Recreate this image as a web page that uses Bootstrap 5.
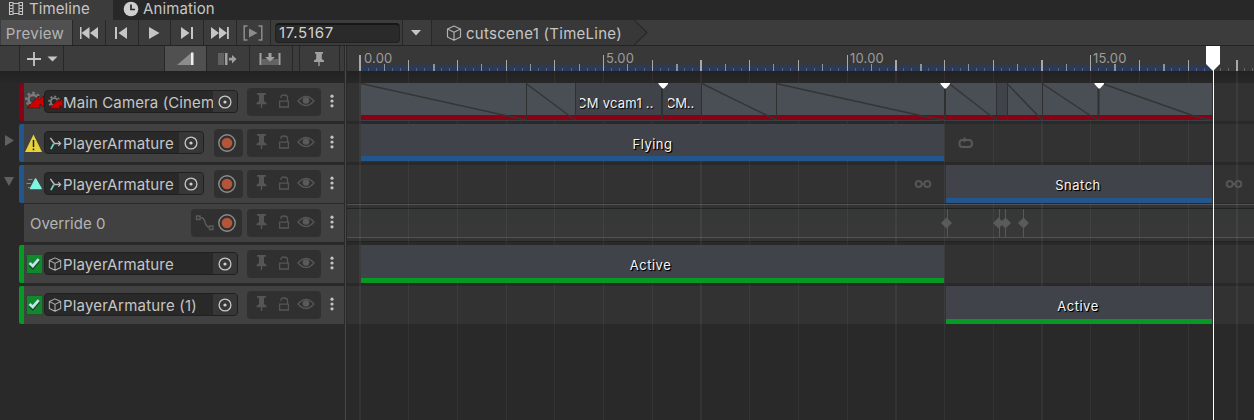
<!DOCTYPE html>
<html lang="en">
<head>
<meta charset="utf-8">
<title>Timeline</title>
<link href="https://cdn.jsdelivr.net/npm/bootstrap@5.3.0/dist/css/bootstrap.min.css" rel="stylesheet">
<style>
body{margin:0;background:#292929;color:#c6c6c6;font-family:Inter,"Liberation Sans",sans-serif;font-size:15px;line-height:20px;width:1254px;height:420px;overflow:hidden;white-space:nowrap}
svg{display:block;flex:none}
.tabs{height:20px;background:#282828}
.tab-on{width:113px;background:#3c3c3c}
.tab-off{padding-left:10px}
.tabs span{line-height:17px;letter-spacing:.1px}
.bar{height:26px;background:#3c3c3c;border-bottom:1px solid #232323}
.tb{border-right:1px solid #272727;height:100%;display:flex;align-items:center;justify-content:center;flex:none}
.nudge{padding-right:2px}
.preview{background:#505050;width:72px;margin-left:1px;color:#b4b4b4;letter-spacing:.3px;padding:2px 3px 0 0}
.timebox{width:125px;height:20px;background:#2a2a2a;border:1px solid #212121;border-top:2px solid #161616;border-radius:4px;margin:0 2px 0 4px;padding-left:3px;line-height:16px;color:#d2d2d2;flex:none;letter-spacing:.75px}
.crumb{width:202px;background:#383838;height:100%;flex:none}
.crumb span{letter-spacing:.27px;padding-top:2px}
.left{width:344px;flex:none}
.bar2{height:25px;background:#3c3c3c}
.split{width:3px;flex:none;background:linear-gradient(90deg,#292929 1px,#484848 1px,#484848 2px,#292929 2px)}
.right{width:907px;flex:none;position:relative}
.thead{height:38px;margin-bottom:3px;display:flex;position:relative}
.fold{width:19px;flex:none}
.strip{width:5px;flex:none;border-radius:2px 0 0 2px}
.hbody{width:320px;background:#414141;display:flex;flex:none;position:relative}
.ticon{width:20px;padding:0 0 0 1px;flex:none}
.obj{width:194px;height:23px;margin-top:7px;background:#292929;border:1px solid #202020;border-radius:4px;display:flex;flex:none;overflow:hidden}
.obj.short{width:160px}
.obj .nm{flex:1 1 0;min-width:0;line-height:23px;letter-spacing:.12px}
.pick{width:24px;background:#373737;display:flex;align-items:center;justify-content:center;flex:none;padding-right:1px}
.rec,.grp{height:28px;margin-top:5px;background:#303030;border-radius:4px;display:flex;align-items:center;flex:none}
.rec{width:29px;margin-left:10px;padding-left:4px}
.grp{width:74px;margin-left:4px}
.kebab{margin:10px 0 0 9px}
.red{background:#8a0014}.blue{background:#23568c}.green{background:#069a24}
.lane{height:38px;margin-bottom:3px;background:#323232;display:flex}
.gridlines{position:absolute;left:0;top:25px;z-index:1}
.lanes{position:relative;height:349px;padding-top:12px}
.clip{height:37px;background:#41434b;display:flex;flex-direction:column;z-index:2;flex:none}
.clip b{font-weight:400;font-size:13px;letter-spacing:.5px;color:#f6f6f6;text-shadow:1px 1px 0 #000,1px 1px 1px #000;text-align:center;flex:1;line-height:40px;height:32px;overflow:hidden;padding-right:2px}
.clip i{height:5px}
.lane svg{z-index:2}
.curve{height:42px;display:flex;background:linear-gradient(#292929 0 1px,#525252 1px 2px,#333 2px 5px,#222 5px 6px,#363837 6px 20px,#383838 20px 34px,#525252 34px 35px,#333 35px 38px,#222 38px 39px,#292929 39px)}
.playhead{position:absolute;left:859px;top:0;z-index:3}
.fade12{position:absolute;top:25px;left:0;width:907px;height:12px;background:linear-gradient(#222,#282828)}
</style>
<script src="https://cdn.jsdelivr.net/npm/bootstrap@5.3.0/dist/js/bootstrap.bundle.min.js"></script>
</head>
<body>
<svg width="0" height="0" style="position:absolute">
<symbol id="cube" viewBox="0 0 16 16"><path d="M8 1L14.5 4V12L8 15.2L1.5 12V4ZM1.5 4L8 7.3L14.5 4M8 7.3V15" fill="none" stroke="#b0b0b0" stroke-width="1.2" stroke-linejoin="round"/></symbol>
<symbol id="target" viewBox="0 0 14 14"><circle cx="7" cy="7" r="5.9" fill="none" stroke="#c8c8c8" stroke-width="1.3"/><circle cx="7" cy="7" r="1.6" fill="#d0d0d0"/></symbol>
<symbol id="record" viewBox="0 0 18 18"><circle cx="9" cy="9" r="8.2" fill="none" stroke="#8c8c8c" stroke-width="1.4"/><circle cx="9" cy="9" r="5.3" fill="#b4553a"/></symbol>
<symbol id="dots" viewBox="0 0 4 18"><g fill="#c4c4c4"><circle cx="2" cy="3.2" r="1.6"/><circle cx="2" cy="8" r="1.6"/><circle cx="2" cy="12.8" r="1.6"/></g></symbol>
<symbol id="flags" viewBox="0 0 74 28"><path d="M10 5H19V6.800H17V13L19.500 15V16.300H15.200V20H13.800V16.300H9.500V15L12 13V6.800H10Z" fill="#555"/><path d="M34 10V9Q34 7 37 7T40.500 9V13M32.600 13.200H41.400V19H32.600Z" fill="none" stroke="#555" stroke-width="1.3"/><path d="M51 13Q59 4 67 13Q59 22 51 13Z" fill="none" stroke="#555" stroke-width="1.3"/><circle cx="59" cy="12.5" r="3.300" fill="#5a5a5a"/></symbol>
<symbol id="camgear" viewBox="0 0 19 19"><circle cx="8" cy="8.500" r="4.500" fill="none" stroke="#7c7c7c" stroke-width="2.400"/><circle cx="8" cy="8.500" r="6.700" fill="none" stroke="#7c7c7c" stroke-width="2.200" stroke-dasharray="2.600 2.500"/><path d="M2 17L13.500 5V9L18.500 5V16L15 13V17Z" fill="#d00000" stroke="#400" stroke-width=".5"/></symbol>
<symbol id="avatar" viewBox="0 0 14 14"><path d="M1.500 1L5.500 6.500M5 7H12" stroke="#bbb" stroke-width="1.600" fill="none"/><path d="M10 4.500L12.500 7L10 9.500" stroke="#bbb" stroke-width="1.300" fill="none"/><path d="M5 7.500L2 13" stroke="#5bdcc8" stroke-width="1.900"/></symbol>
<symbol id="check" viewBox="0 0 17 20"><path d="M0 0H17V20H0Z" fill="#2b4a31"/><path d="M1 1H16V19H1Z" fill="#12882c"/><path d="M3.700 10.700L6.800 13.700L13.200 6.300" fill="none" stroke="#154a20" stroke-width="3"/><path d="M3.500 9L6.800 12L12.700 5.200" fill="none" stroke="#c6e2ee" stroke-width="2.700"/></symbol>
<symbol id="inf" viewBox="0 0 18 10"><g fill="none" stroke="#555" stroke-width="2"><circle cx="4.700" cy="5" r="3"/><circle cx="13.300" cy="5" r="3"/><path d="M7 5H11"/></g></symbol>
</svg>

<div class="tabs d-flex">
 <div class="tab-on d-flex"><svg width="29" height="20"><path d="M9.500 2V15M13 2V15M19 2V15M22.500 2V15M13 3.500H19M13 13.500H19" stroke="#c4c4c4" stroke-width="1.100"/><path d="M11.300 2V15M20.700 2V15" stroke="#c4c4c4" stroke-width="3" stroke-dasharray="1 2"/></svg><span>Timeline</span></div>
 <div class="tab-off d-flex"><svg width="20" height="20"><circle cx="8" cy="9" r="7.300" fill="#cfcfcf"/><path d="M8 4.500V9.500H12" fill="none" stroke="#282828" stroke-width="1.700"/></svg><span>Animation</span></div>
</div>

<div class="bar d-flex align-items-center">
 <div class="tb preview">Preview</div>
 <div class="tb" style="width:33px"><svg width="20" height="14" fill="#c6c6c6"><path d="M1 1H2.500V13H1ZM10.500 1V13L2.500 7ZM19 1V13L11 7Z"/></svg></div>
 <div class="tb nudge" style="width:33px"><svg width="14" height="14" fill="#c6c6c6"><path d="M1 1H3V13H1ZM13 1V13L4.500 7Z"/></svg></div>
 <div class="tb nudge" style="width:32px"><svg width="12" height="14" fill="#c6c6c6"><path d="M1 1L11.500 7L1 13Z"/></svg></div>
 <div class="tb" style="width:33px"><svg width="14" height="14" fill="#c6c6c6"><path d="M1 1L9.500 7L1 13ZM11 1H13V13H11Z"/></svg></div>
 <div class="tb" style="width:33px"><svg width="20" height="14" fill="#c6c6c6"><path d="M1 1L9 7L1 13ZM9 1L17 7L9 13ZM17 1H18.800V13H17Z"/></svg></div>
 <div class="tb nudge" style="width:34px"><svg width="20" height="16"><path d="M4.500 1H1.200V15H4.500M15.500 1H18.800V15H15.500" fill="none" stroke="#8c8c8c" stroke-width="1.500"/><path d="M6 3.500L14.500 8L6 12.500Z" fill="#8c8c8c"/></svg></div>
 <div class="timebox">17.5167</div>
 <div class="tb nudge" style="width:30px;border-left:1px solid #272727"><svg width="10" height="6"><path d="M0 0H10L5 5.500Z" fill="#c6c6c6"/></svg></div>
 <div class="crumb d-flex align-items-center ps-3 gap-1"><svg width="16" height="18" style="margin-left:-2px"><use href="#cube"/></svg><span>cutscene1 (TimeLine)</span></div>
 <svg width="16" height="25"><path d="M0 0L13 12.500L0 25Z" fill="#383838"/><path d="M0 0L13 12.500L0 25" fill="none" stroke="#282828" stroke-width="1.200"/></svg>
</div>

<div class="d-flex">
 <div class="left">
  <div class="bar2 d-flex">
   <div class="tb" style="width:20px"></div>
   <div class="tb" style="width:44px"><svg width="34" height="16"><path d="M9 1V15M2 8H16" stroke="#c6c6c6" stroke-width="1.800"/><path d="M22.500 5.500H32.500L27.500 10.500Z" fill="#c6c6c6"/></svg></div>
   <div class="tb" style="width:101px"></div>
   <div class="tb" style="width:42px;background:#505050"><svg width="18" height="14"><path d="M0 13L14 1V13Z" fill="#8c8c8c"/><path d="M14 .5H16.500V13H14Z" fill="#eee"/></svg></div>
   <div class="tb nudge" style="width:43px"><svg width="20" height="14"><path d="M1 1H7V13H1Z" fill="#606060"/><path d="M8 1H10.500V13H8Z" fill="#a0a0a0"/><path d="M12 5.800H15V3L19.500 7L15 11.500V8.500H12Z" fill="#a0a0a0"/></svg></div>
   <div class="tb nudge" style="width:43px"><svg width="22" height="14"><path d="M3 7H19V13H3Z" fill="#636363"/><path d="M1.500 1V13M20.500 1V13" stroke="#a0a0a0" stroke-width="2"/><path d="M9.500 1H12.500V5H16L11 9.500L6 5H9.500Z" fill="#a0a0a0"/></svg></div>
   <div class="tb" style="width:7px"></div>
   <div class="tb nudge" style="width:40px"><svg width="12" height="16"><path d="M2 1H10V2.800H8.800V8L11 9.500V11H6.700V15H5.300V11H1V9.500L3.200 8V2.800H2Z" fill="#a0a0a0"/></svg></div>
  </div>
  <div style="height:12px;background:linear-gradient(#222,#282828)"></div>

  <div class="thead"><div class="fold"></div><div class="strip red"></div><div class="hbody">
   <div class="ticon"><svg width="19" height="19" style="margin-top:8px"><use href="#camgear"/></svg></div>
   <div class="obj"><svg width="18" height="21" viewBox="-3 -4 18 21"><use href="#camgear" width="15" height="15"/></svg><span class="nm">Main Camera (Cinem</span><div class="pick"><svg width="14" height="14"><use href="#target"/></svg></div></div>
   <div class="grp" style="margin-left:9px"><svg width="74" height="28"><use href="#flags"/></svg></div><svg class="kebab" width="4" height="18"><use href="#dots"/></svg>
  </div></div>

  <div class="thead"><div class="fold"><svg width="19" height="38"><path d="M5 11L14 16.500L5 22Z" fill="#606060"/></svg></div><div class="strip blue"></div><div class="hbody">
   <div class="ticon"><svg width="18" height="38"><path d="M8.500 10.500L17 28H0Z" fill="#e6d33a"/><path d="M8.500 16V23M8.500 24.500V26.300" stroke="#222" stroke-width="1.500"/></svg></div>
   <div class="obj short"><svg width="18" height="21" viewBox="-4 -5 18 21"><use href="#avatar" width="13" height="13"/></svg><span class="nm">PlayerArmature</span><div class="pick"><svg width="14" height="14"><use href="#target"/></svg></div></div>
   <div class="rec"><svg width="18" height="18"><use href="#record"/></svg></div>
   <div class="grp"><svg width="74" height="28"><use href="#flags"/></svg></div><svg class="kebab" width="4" height="18"><use href="#dots"/></svg>
  </div></div>

  <div class="thead"><div class="fold"><svg width="19" height="38"><path d="M4 12H14L9 21Z" fill="#606060"/></svg></div><div class="strip blue"></div><div class="hbody">
   <div class="ticon"><svg width="18" height="38"><path d="M10.500 14L16 23.500H5.500Z" fill="#7df5e2" stroke="#7df5e2" stroke-width="1.500" stroke-linejoin="round"/><path d="M3 14.500H7.500M1.500 18.500H6M3 22.500H4.500" stroke="#888" stroke-width="1.200"/></svg></div>
   <div class="obj short"><svg width="18" height="21" viewBox="-4 -5 18 21"><use href="#avatar" width="13" height="13"/></svg><span class="nm">PlayerArmature</span><div class="pick"><svg width="14" height="14"><use href="#target"/></svg></div></div>
   <div class="rec"><svg width="18" height="18"><use href="#record"/></svg></div>
   <div class="grp"><svg width="74" height="28"><use href="#flags"/></svg></div><svg class="kebab" width="4" height="18"><use href="#dots"/></svg>
  </div></div>

  <div class="thead" style="margin-top:-2px"><div class="fold"></div><div style="width:5px"></div><div class="hbody">
   <span style="width:167px;padding-left:6px;line-height:40px;color:#b4b4b4">Override 0</span>
   <div class="rec" style="width:51px;margin-left:0;padding:0"><svg width="51" height="28"><path d="M5.500 7H9V10.500H5.500ZM18.500 17H22V20.500H18.500ZM9 8.500Q13 8.500 14 13T18.500 18.500" fill="none" stroke="#5a5a5a" stroke-width="1.400"/><use href="#record" x="27" y="5" width="18" height="18"/></svg></div>
   <div class="grp" style="margin-left:5px"><svg width="74" height="28"><use href="#flags"/></svg></div><svg class="kebab" width="4" height="18"><use href="#dots"/></svg>
  </div></div>

  <div class="thead"><div class="fold"></div><div class="strip green"></div><div class="hbody">
   <div class="ticon"><svg width="17" height="20" style="margin:9px 0 0 1px"><use href="#check"/></svg></div>
   <div class="obj"><svg width="18" height="21" viewBox="-3 -4 18 21"><use href="#cube" width="14" height="14"/></svg><span class="nm">PlayerArmature</span><div class="pick"><svg width="14" height="14"><use href="#target"/></svg></div></div>
   <div class="grp" style="margin-left:9px"><svg width="74" height="28"><use href="#flags"/></svg></div><svg class="kebab" width="4" height="18"><use href="#dots"/></svg>
  </div></div>

  <div class="thead"><div class="fold"></div><div class="strip green"></div><div class="hbody">
   <div class="ticon"><svg width="17" height="20" style="margin:9px 0 0 1px"><use href="#check"/></svg></div>
   <div class="obj"><svg width="18" height="21" viewBox="-3 -4 18 21"><use href="#cube" width="14" height="14"/></svg><span class="nm" style="letter-spacing:.2px">PlayerArmature (1)</span><div class="pick"><svg width="14" height="14"><use href="#target"/></svg></div></div>
   <div class="grp" style="margin-left:9px"><svg width="74" height="28"><use href="#flags"/></svg></div><svg class="kebab" width="4" height="18"><use href="#dots"/></svg>
  </div></div>
 </div>
 <div class="split"></div>

 <div class="right">
  <svg id="ruler" width="907" height="25" style="background:#383838" font-size="13" fill="#9c9c9c" letter-spacing=".2">
   <rect x="14" y="19" width="852" height="6" fill="#2c3a5a"/>
   <text x="17" y="16.500">0.00</text><text x="259" y="16.500">5.00</text><text x="503" y="16.500">10.00</text><text x="746" y="16.500">15.00</text>
  </svg>
  <div class="fade12"></div>
  <svg id="grid" class="gridlines" width="907" height="349"></svg>
  <div class="lanes">
   <div class="lane">
    <svg width="907" height="38" font-size="13" fill="#f2f2f2" style="position:relative">
     <path d="M14 0H865V38H14Z" fill="#4a4f55"/>
     <path d="M228 0H354V38H228ZM649 0H660V38H649Z" fill="#41434b"/>
     <path d="M14 32H865V37H14Z" fill="#8a0014"/>
     <path d="M14 37H865V38H14Z" fill="#3c3f44"/>
     <path d="M14 .5L165 34L179 37M179 .5L228 37M355 .5L429 37M429 .5L580 34L597 37M602 .5L649 37M660 .5L695 37M695 .5L750 37M755 .5L850 34L865 37" fill="none" stroke="#343434" stroke-width="1.400"/>
     <path d="M179.500 0V37M228.500 0V37M354.500 0V37M429.500 0V37M649.500 0V37M660.500 0V37M695.500 0V37" stroke="#303030"/>
     <path d="M315 0V37M598 0V37M751.500 0V37" stroke="#303030" stroke-width="2"/>
     <path d="M311.500 0H321V1L317 5.500H315.500L311.500 1ZM593.500 0H603V1L599 5.500H597.500L593.500 1ZM747.500 0H757V1L753 5.500H751.500L747.500 1Z" fill="#fff"/>
     <svg x="233" y="0" width="77" height="32"><text x="-3" y="24.500" letter-spacing=".25" style="text-shadow:1px 1px 1px #000">CM vcam1 ..</text></svg>
     <svg x="321" y="0" width="33" height="32"><text x="-2" y="24.500" letter-spacing="-.2" style="text-shadow:1px 1px 1px #000">CM..</text></svg>
    </svg>
   </div>
   <div class="lane"><div class="clip" style="margin-left:14px;width:583px"><b style="padding:0">Flying</b><i class="blue"></i></div><svg width="18" height="14" style="margin:12px 0 0 13px"><path d="M6.500 4H5Q2.500 4 2.500 7.500T5 11H12Q15 11 15 7.500T12 4H9.500M7.500 1.500V6M7.500 4H10" fill="none" stroke="#585858" stroke-width="2"/></svg></div>
   <div class="lane mb-0"><svg width="18" height="10" style="margin:14px 0 0 567px"><use href="#inf"/></svg><div class="clip" style="margin-left:14px;width:266px;height:38px"><b>Snatch</b><i class="blue"></i></div><svg width="18" height="10" style="margin:14px 0 0 13px"><use href="#inf"/></svg></div>
   <div class="curve"><svg width="907" height="41" style="z-index:2"><path d="M600.500 6V34M652.500 6V34M658.500 6V34M676.500 6V34" stroke="#585858"/><path d="M594 20L599.500 14.500L605 20L599.500 25.500ZM646 20L651.500 14.500L655 18L658.500 14.500L664 20L658.500 25.500L655 22L651.500 25.500ZM671 20L676.500 14.500L682 20L676.500 25.500Z" fill="#5a5a5a"/></svg></div>
   <div class="lane"><div class="clip" style="margin-left:14px;width:583px;height:38px"><b style="padding-right:4px">Active</b><i class="green"></i></div></div>
   <div class="lane"><div class="clip" style="margin-left:599px;width:266px;height:38px"><b>Active</b><i class="green"></i></div></div>
  </div>
  <svg class="playhead" width="14" height="374"><path d="M0 0H14V18L8 24H6L0 18Z" fill="#fff"/><path d="M7 22H8V374H7Z" fill="#fff"/></svg>
 </div>
</div>
<script>
// One-second marks: [left edge, width] in pixels from the start of the ruler
const marks=[[12,2],[61,1],[110,1],[159,1],[207,1],[256,1],[305,1],[353,2],[402,1],[451,1],[500,1],[548,2],[597,1],[646,1],[694,2],[743,1],[792,1],[841,1],[889,2]];
let ruler='',grid='';
marks.forEach(([x,w],k)=>{
 const top=k%5?14:9;
 ruler+=`<rect x="${x}" y="${top}" width="${w}" height="${25-top}" fill="#a8a8a8"/>`;
 grid+=`<rect x="${x}" y="0" width="${w}" height="349" fill="#fff" fill-opacity=".05"/>`;
 for(let j=1;j<6;j++){const p=Math.round(13+48.7*(k+j/6)-.5);if(p>906)break;
  ruler+=j==3?`<rect x="${p}" y="18" width="${k%5==1||k==15?2:1}" height="7" fill="#8c929c"/>`:`<rect x="${p}" y="22" width="1" height="3" fill="${p>866?'#666':'#56627c'}"/>`;}
});
document.getElementById('ruler').insertAdjacentHTML('beforeend',ruler);
document.getElementById('grid').innerHTML=grid;
</script>
</body>
</html>
